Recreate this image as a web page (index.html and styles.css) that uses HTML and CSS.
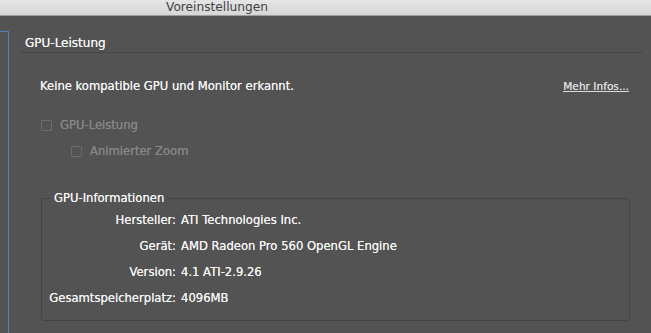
FILE: index.html
```html
<!DOCTYPE html>
<html lang="de">
<head>
    <meta charset="UTF-8">
    <title>Voreinstellungen</title>
    <link rel="stylesheet" href="styles.css">
</head>
<body>

    <!-- Window title bar -->
    <div class="titlebar">Voreinstellungen</div>

    <div class="window">
        <!-- Selected list item, cut off at the left edge -->
        <div class="sidebar">
            <div class="sidebar-item"></div>
        </div>

        <div class="panel">
            <div class="section-title">GPU-Leistung</div>

            <div class="notice">
                <span>Keine kompatible GPU und Monitor erkannt.</span>
                <a href="#" class="more-link">Mehr Infos...</a>
            </div>

            <label class="check disabled">
                <span class="box"></span>GPU-Leistung
            </label>
            <label class="check disabled sub">
                <span class="box"></span>Animierter Zoom
            </label>

            <fieldset class="info">
                <legend>GPU-Informationen</legend>
                <div class="info-row">
                    <span class="key">Hersteller:</span>
                    <span class="value">ATI Technologies Inc.</span>
                </div>
                <div class="info-row">
                    <span class="key">Gerät:</span>
                    <span class="value">AMD Radeon Pro 560 OpenGL Engine</span>
                </div>
                <div class="info-row">
                    <span class="key">Version:</span>
                    <span class="value">4.1 ATI-2.9.26</span>
                </div>
                <div class="info-row">
                    <span class="key">Gesamtspeicherplatz:</span>
                    <span class="value">4096MB</span>
                </div>
            </fieldset>
        </div>
    </div>

</body>
</html>
```

FILE: styles.css
```css
* {
    margin: 0;
    padding: 0;
    box-sizing: border-box;
}

body {
    font-family: 'DejaVu Sans', 'Noto Sans', sans-serif;
    font-size: 11.6px;
    background-color: #535353;
    color: #f4f4f4;
    height: 333px;
    overflow: hidden;
}

/* Title bar */
.titlebar {
    height: 16px;
    line-height: 15px;
    padding-left: 166px;
    font-size: 12.2px;
    color: #424242;
    background: linear-gradient(#e6e6e6, #d6d6d6);
    border-bottom: 1px solid #9c9c9c;
}

.window {
    display: flex;
    height: 317px;
}

/* Sidebar (selected item, mostly cropped) */
.sidebar {
    width: 9px;
    padding-top: 15px;
}

.sidebar-item {
    height: 100%;
    border: 1px solid #4f82bd;
    border-left: none;
    border-bottom: none;
}

/* Main panel */
.panel {
    flex: 1;
    padding: 0 8px 0 11px;
    text-shadow: 0 0 0.4px currentColor;
}

.section-title {
    padding: 20px 5px 2px;
    font-size: 12px;
    border-bottom: 1px solid #474747;
}

.notice {
    display: flex;
    justify-content: space-between;
    align-items: center;
    margin: 26px 0 0 20px;
    padding-right: 14px;
}

.more-link {
    color: #dcdcdc;
    font-size: 10.6px;
    text-decoration: underline;
}

/* Disabled checkboxes */
.check {
    display: flex;
    align-items: center;
    margin-left: 21px;
    height: 26px;
    color: #878787;
}

.check:first-of-type {
    margin-top: 19px;
}

.check.sub {
    margin-left: 51px;
}

.check .box {
    width: 11px;
    height: 11px;
    border: 1px solid #6c6c6c;
    border-radius: 1px;
    margin-right: 8px;
}

/* GPU info group */
.info {
    margin: 27px 13px 0 21px;
    height: 130px;
    border: 1px solid #444444;
    border-radius: 3px;
    padding: 2px 0 0 7px;
}

.info legend {
    padding: 0 4px;
    margin-left: 1px;
}

.info-row {
    display: flex;
    height: 26px;
    align-items: center;
}

.info-row .key {
    width: 127px;
    text-align: right;
    margin-right: 5px;
}
```
